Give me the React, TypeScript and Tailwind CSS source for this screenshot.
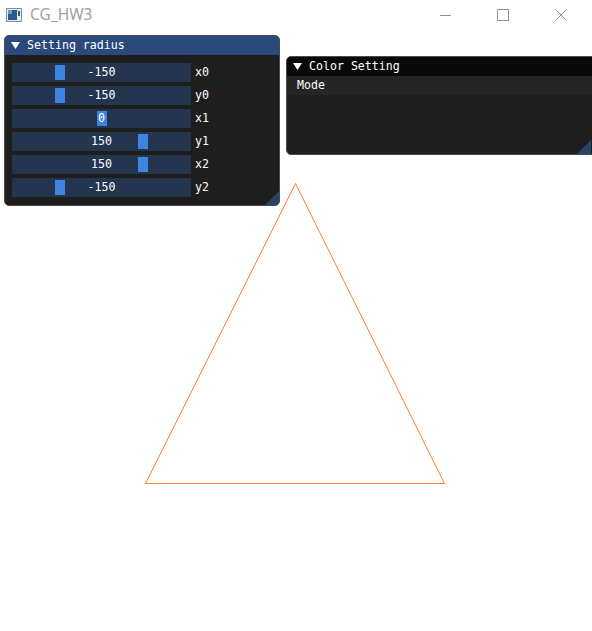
import React from "react";

const sliders = [
  { label: "x0", value: -150 },
  { label: "y0", value: -150 },
  { label: "x1", value: 0 },
  { label: "y1", value: 150 },
  { label: "x2", value: 150 },
  { label: "y2", value: -150 },
];

const mono = { fontFamily: '"DejaVu Sans Mono", "Liberation Mono", monospace' };

function Slider({ label, value }: { label: string; value: number }) {
  // range -300..300, frame inner width 175, grab 10
  const t = (value + 300) / 600;
  const left = 2 + Math.round(t * 165);
  return (
    <div className="flex h-[19px] items-center">
      <div className="relative h-[19px] w-[179px] bg-[#243550]">
        <div className="absolute top-[2px] h-[15px] w-[10px] bg-[#3d85e0]" style={{ left }} />
        <div className="absolute inset-0 flex items-center justify-center text-[11.6px] text-white leading-none">
          {value}
        </div>
      </div>
      <span className="ml-[4px] text-[11.6px] text-white leading-none">{label}</span>
    </div>
  );
}

function Arrow() {
  return (
    <svg width="9" height="7" viewBox="0 0 9 7" className="mr-[7px]">
      <polygon points="0,0 9,0 4.5,7" fill="#ffffff" />
    </svg>
  );
}

export default function App() {
  return (
    <div className="flex h-[631px] w-[592px] flex-col overflow-hidden bg-white" style={mono}>
      <div className="flex h-[30px] shrink-0 items-center">
        <svg width="16" height="14" viewBox="0 0 16 14" className="ml-[6px]">
          <rect x="0.5" y="0.5" width="15" height="13" fill="#e8edf3" stroke="#7d8fa6" />
          <rect x="2" y="2" width="9" height="10" fill="#2b5a8f" />
          <rect x="2" y="2" width="4" height="4" fill="#6b9cd2" />
          <rect x="12" y="3" width="2" height="5" fill="#2b5a8f" />
        </svg>
        <span
          className="ml-[8px] text-[15.5px] text-[#a0a0a0]"
          style={{ fontFamily: '"Noto Sans", "Open Sans", sans-serif' }}
        >
          CG_HW3
        </span>
        <div className="ml-auto flex h-full items-center">
          <div className="flex h-full w-[46px] items-center justify-center">
            <div className="h-px w-[11px] bg-[#8a94a0]" />
          </div>
          <div className="ml-[12px] flex h-full w-[46px] items-center justify-center">
            <div className="h-[12px] w-[12px] border border-[#8a94a0]" />
          </div>
          <div className="ml-[12px] flex h-full w-[46px] items-center justify-center">
            <svg width="12" height="12" viewBox="0 0 12 12">
              <path d="M0.5 0.5 L11.5 11.5 M11.5 0.5 L0.5 11.5" stroke="#8a94a0" strokeWidth="1" />
            </svg>
          </div>
          <div className="w-[8px]" />
        </div>
      </div>

      <div className="relative flex-1">
        <svg className="absolute left-0 top-0" width="592" height="601" viewBox="0 0 592 601">
          <polygon
            points="295.5,153.5 145.5,453.5 444.5,453.5"
            fill="none"
            stroke="#ff7f2a"
            strokeWidth="1"
          />
        </svg>

        {/* Setting radius window */}
        <div className="absolute left-[4px] top-[5px] flex h-[171px] w-[276px] flex-col overflow-hidden rounded-[5px] border border-[#4a4a55] bg-[#1e1e1e]">
          <div className="flex h-[19px] shrink-0 items-center bg-[#294a7a] pl-[6px] text-[11.6px] leading-none text-white">
            <Arrow />
            Setting radius
          </div>
          <div className="flex flex-col gap-[4px] pl-[7px] pt-[8px]">
            {sliders.map((s) => (
              <Slider key={s.label} label={s.label} value={s.value} />
            ))}
          </div>
          <svg className="absolute bottom-0 right-0" width="14" height="14" viewBox="0 0 14 14">
            <polygon points="14,0 14,14 0,14" fill="#2a4263" />
          </svg>
        </div>

        {/* Color Setting window */}
        <div className="absolute left-[286px] top-[26px] flex h-[99px] w-[310px] flex-col overflow-hidden rounded-[5px] border border-[#4a4a55] bg-[#1e1e1e]">
          <div className="flex h-[19px] shrink-0 items-center bg-[#0a0a0a] pl-[6px] text-[11.6px] leading-none text-white">
            <Arrow />
            Color Setting
          </div>
          <div className="flex h-[19px] shrink-0 items-center bg-[#252525] pl-[10px] text-[11.6px] leading-none text-white">
            Mode
          </div>
          <svg className="absolute bottom-0 right-[4px]" width="14" height="14" viewBox="0 0 14 14">
            <polygon points="14,0 14,14 0,14" fill="#2a4263" />
          </svg>
        </div>
      </div>
    </div>
  );
}
